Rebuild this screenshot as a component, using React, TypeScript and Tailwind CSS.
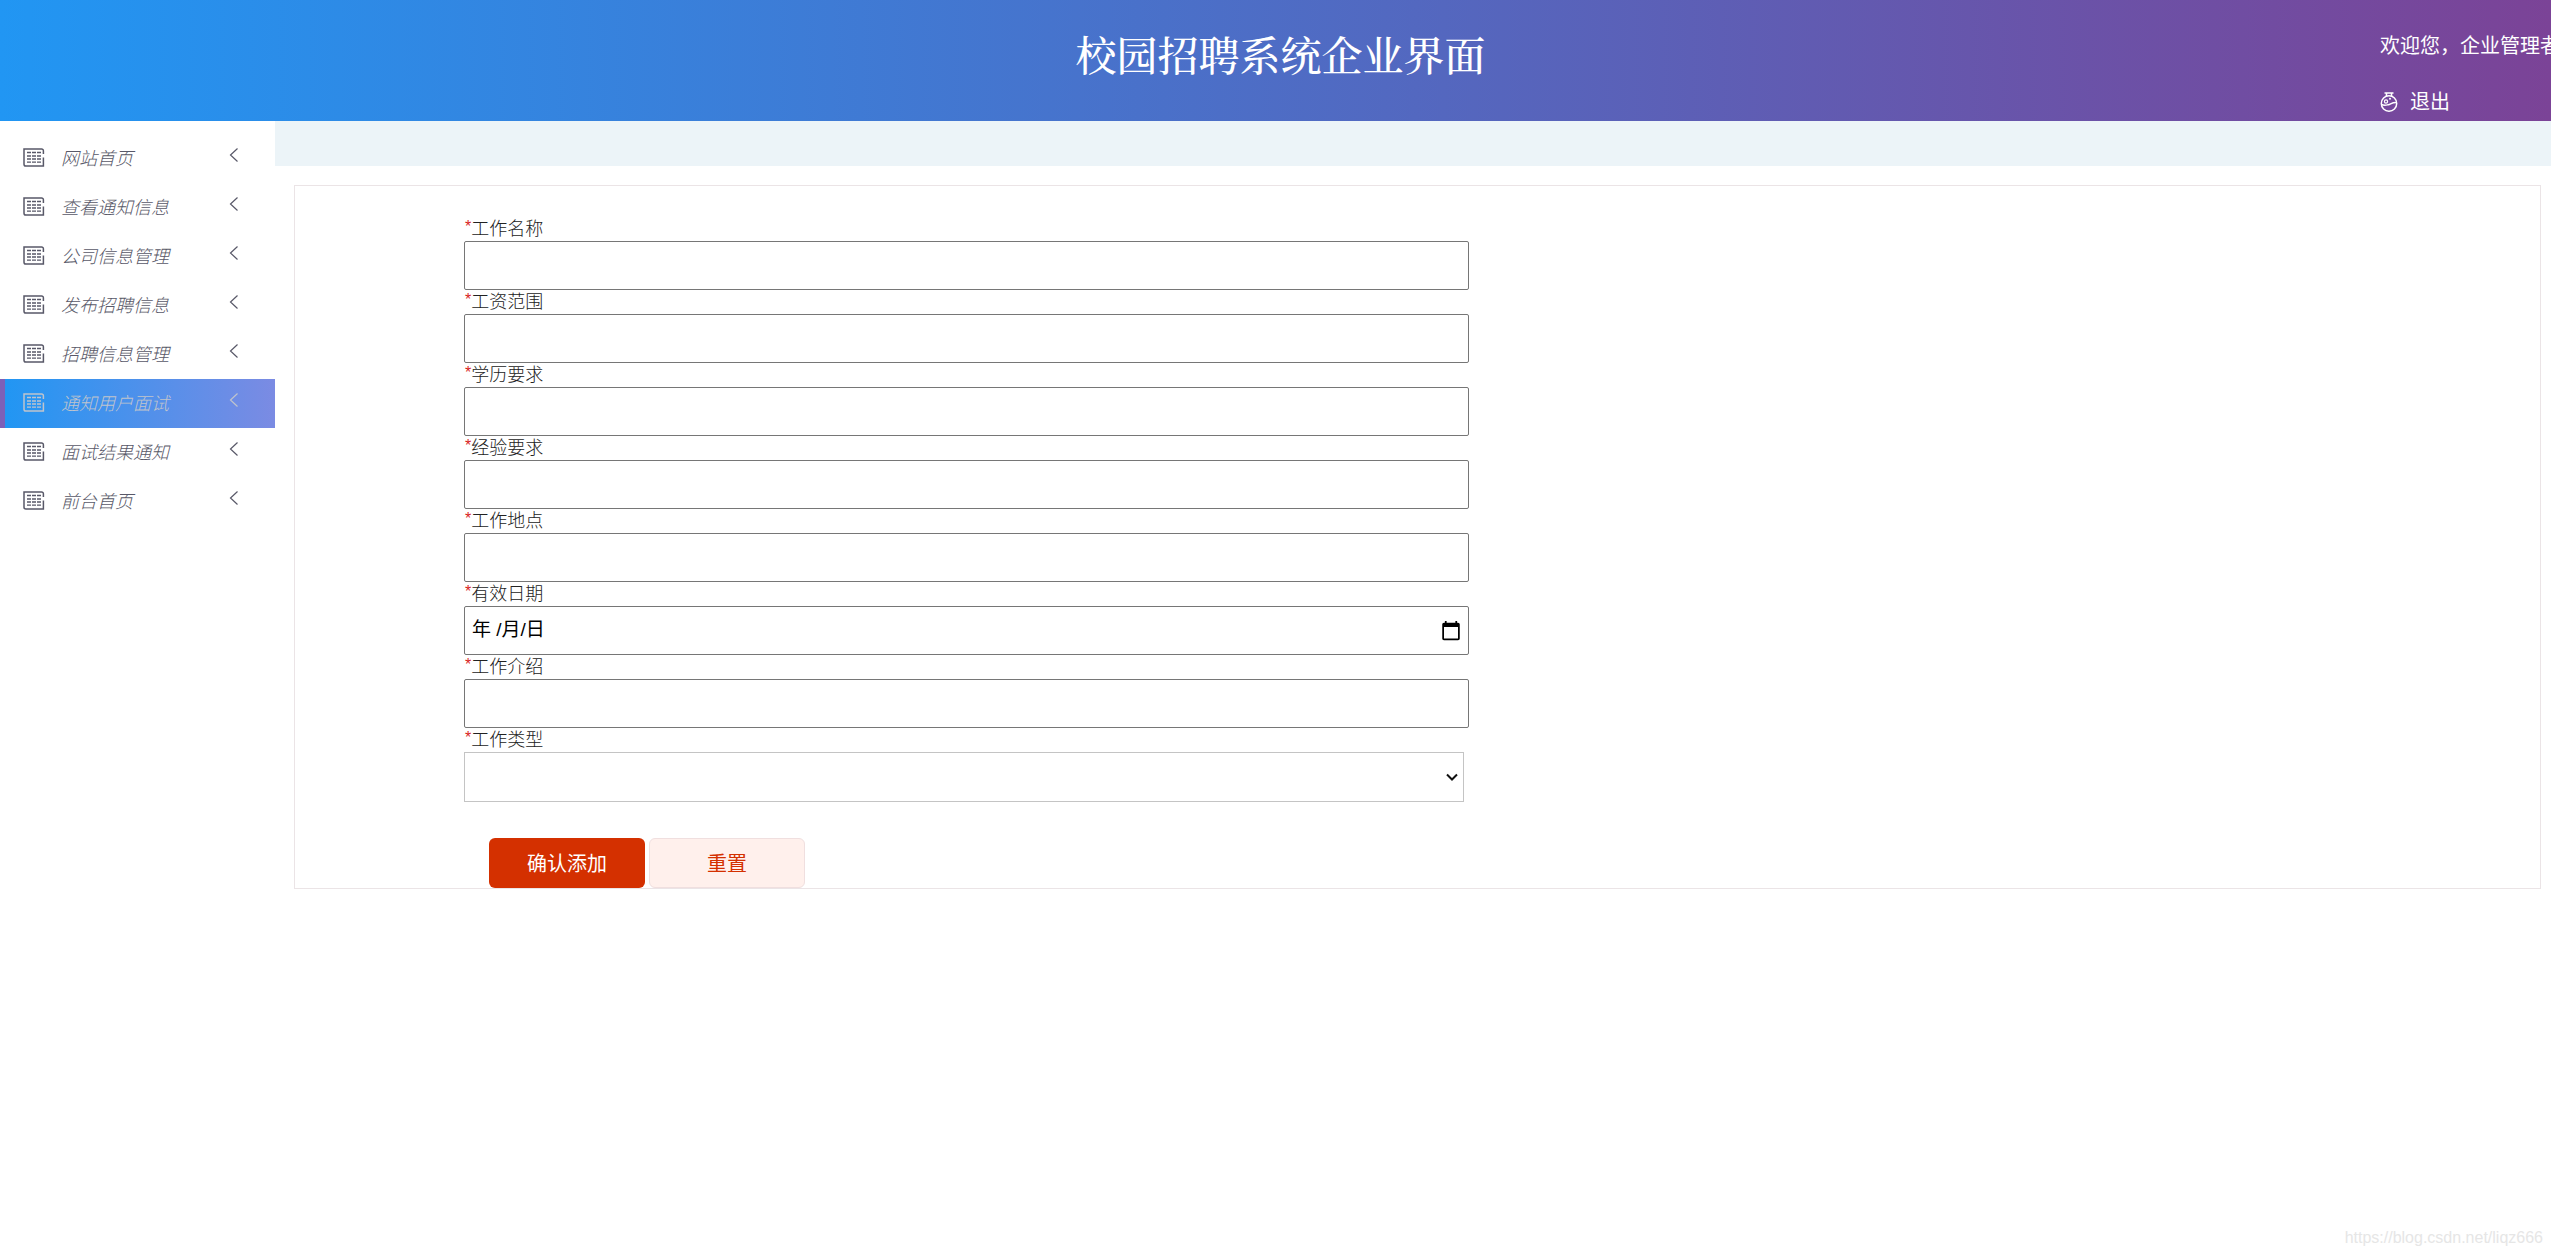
import React from 'react';

interface IMenuItem {
    title: string;
    active?: boolean;
}

interface IField {
    id: string;
    label: string;
    type: 'text' | 'date' | 'select';
}

const menuItems: IMenuItem[] = [
    { title: '网站首页' },
    { title: '查看通知信息' },
    { title: '公司信息管理' },
    { title: '发布招聘信息' },
    { title: '招聘信息管理' },
    { title: '通知用户面试', active: true },
    { title: '面试结果通知' },
    { title: '前台首页' },
];

const fields: IField[] = [
    { id: 'jobName', label: '工作名称', type: 'text' },
    { id: 'salary', label: '工资范围', type: 'text' },
    { id: 'education', label: '学历要求', type: 'text' },
    { id: 'experience', label: '经验要求', type: 'text' },
    { id: 'address', label: '工作地点', type: 'text' },
    { id: 'validDate', label: '有效日期', type: 'date' },
    { id: 'intro', label: '工作介绍', type: 'text' },
    { id: 'jobType', label: '工作类型', type: 'select' },
];

const ListIcon: React.FC = () => (
    <svg width="22" height="20" viewBox="0 0 22 20" fill="none" stroke="currentColor" aria-hidden="true">
        <path d="M20.4 6V2.8a1.8 1.8 0 0 0-1.8-1.8H1v15.2a1.8 1.8 0 0 0 1.8 1.8h17.6V9.5" strokeWidth="1.5" />
        <path d="M4 4.5h14M4 8h14M4 11h14M4 14.2h14" strokeWidth="1.3" strokeDasharray="4 1" />
    </svg>
);

const ArrowIcon: React.FC = () => (
    <svg width="10" height="14" viewBox="0 0 10 14" fill="none" stroke="currentColor" strokeWidth="1.2" aria-hidden="true">
        <path d="M8.5 0.5 1.5 7l7 6.5" />
    </svg>
);

const FlaskIcon: React.FC = () => (
    <svg width="18" height="20" viewBox="0 0 18 20" fill="none" stroke="currentColor" strokeWidth="1.5" aria-hidden="true">
        <path d="M4.5 1h9M6.5 1v3.2M11.5 1v3.2" />
        <circle cx="9" cy="11.5" r="7.7" />
        <circle cx="6" cy="9.5" r="1.6" strokeWidth="1.2" />
        <circle cx="10" cy="6.8" r="1" fill="currentColor" stroke="none" />
        <path d="M1.5 12.5c3 1.2 4.5.6 6.8.2s3.7-2.4 8-2.2" />
    </svg>
);

const Header: React.FC = () => (
    <header className="grid h-[121px] grid-cols-[1fr_auto_1fr] overflow-hidden bg-linear-to-r/srgb from-[#2196f3] to-[#7b4397] pl-2.5 text-white">
        <div />
        <h1 className="mt-[26px] font-['Noto_Serif_CJK_SC','Noto_Serif_SC','Noto_Sans_CJK_SC',serif] text-[41px] leading-[56px] font-medium">
            校园招聘系统企业界面
        </h1>
        <div className="ml-auto flex w-[171px] flex-col gap-[26px] pt-[31px] text-xl leading-[30px] whitespace-nowrap">
            <span>欢迎您，企业管理者</span>
            <a href="#logout" className="flex items-center gap-3">
                <FlaskIcon />
                退出
            </a>
        </div>
    </header>
);

const Sidebar: React.FC = () => (
    <nav className="w-[275px] shrink-0 pt-[13px]">
        <ul>
            {menuItems.map((item) => (
                <li key={item.title}>
                    <a
                        href="#menu"
                        className={
                            item.active
                                ? 'flex h-[49px] items-center border-l-5 border-[#7d60b8] bg-linear-to-r/srgb from-[#2196f3] to-[#7b8be3] pr-9 pl-[18px] text-[#c0c4cc]'
                                : 'flex h-[49px] items-center border-l-5 border-transparent pr-9 pl-[18px] text-[#585868]'
                        }
                    >
                        <span className="pb-0.5">
                            <ListIcon />
                        </span>
                        <span className="ml-4 grow text-lg font-light italic">{item.title}</span>
                        <span className="pb-2">
                            <ArrowIcon />
                        </span>
                    </a>
                </li>
            ))}
        </ul>
    </nav>
);

const FieldControl: React.FC<{ field: IField }> = ({ field }) => {
    if (field.type === 'select') {
        return (
            <div className="relative mr-[5px]">
                <select id={field.id} className="block h-[50px] w-full appearance-none border border-[#c4c4c4] bg-white px-2 text-lg">
                    <option value=""></option>
                </select>
                <svg className="pointer-events-none absolute top-[21px] right-[6px]" width="12" height="9" viewBox="0 0 12 9" fill="none" stroke="#101010" strokeWidth="2" aria-hidden="true">
                    <path d="m1 1.5 5 5 5-5" />
                </svg>
            </div>
        );
    }

    if (field.type === 'date') {
        return (
            <div className="relative">
                <input
                    id={field.id}
                    type="date"
                    className="block h-[49px] w-full rounded-[2px] border border-[#767676] pr-1 pl-[7px] text-[22px] [&::-webkit-datetime-edit]:text-transparent"
                />
                <span className="pointer-events-none absolute inset-y-0 left-2 flex items-center text-[19px] text-black">年 /月/日</span>
            </div>
        );
    }

    return <input id={field.id} type="text" className="block h-[49px] w-full rounded-[2px] border border-[#767676] px-[7px] text-lg" />;
};

const JobForm: React.FC = () => (
    <form className="border border-[#ebe4e6] pt-[31px] pl-[169px]">
        <div className="max-w-[1005px]">
            {fields.map((field) => (
                <div key={field.id}>
                    <label htmlFor={field.id} className="flex h-6 text-lg leading-6 font-light text-[#222]">
                        <span className="pl-px text-base leading-5 text-[#d81e1e]">*</span>
                        {field.label}
                    </label>
                    <FieldControl field={field} />
                </div>
            ))}
        </div>
        <div className="flex gap-1 pt-9 pl-[25px] text-xl">
            <button type="submit" className="h-[50px] w-[156px] rounded-md bg-[#d43000] pt-0.5 text-white">
                确认添加
            </button>
            <button type="reset" className="h-[50px] w-[156px] rounded-md border border-[#f0dfdf] bg-[#fff0ec] pt-0.5 text-[#d43000]">
                重置
            </button>
        </div>
    </form>
);

const App: React.FC = () => {
    return (
        <div className="flex min-h-screen flex-col bg-white font-['Liberation_Sans','Noto_Sans_CJK_SC',sans-serif]">
            <Header />
            <div className="flex grow">
                <Sidebar />
                <main className="flex min-w-0 grow flex-col">
                    <div className="h-[45px] bg-[#ecf4f8]" />
                    <div className="pt-[19px] pr-[10px] pl-[19px]">
                        <JobForm />
                    </div>
                    <footer className="mt-auto pr-2 pb-1.5 text-right text-base text-[#e6e6e6]">https://blog.csdn.net/liqz666</footer>
                </main>
            </div>
        </div>
    );
};

export default App;
